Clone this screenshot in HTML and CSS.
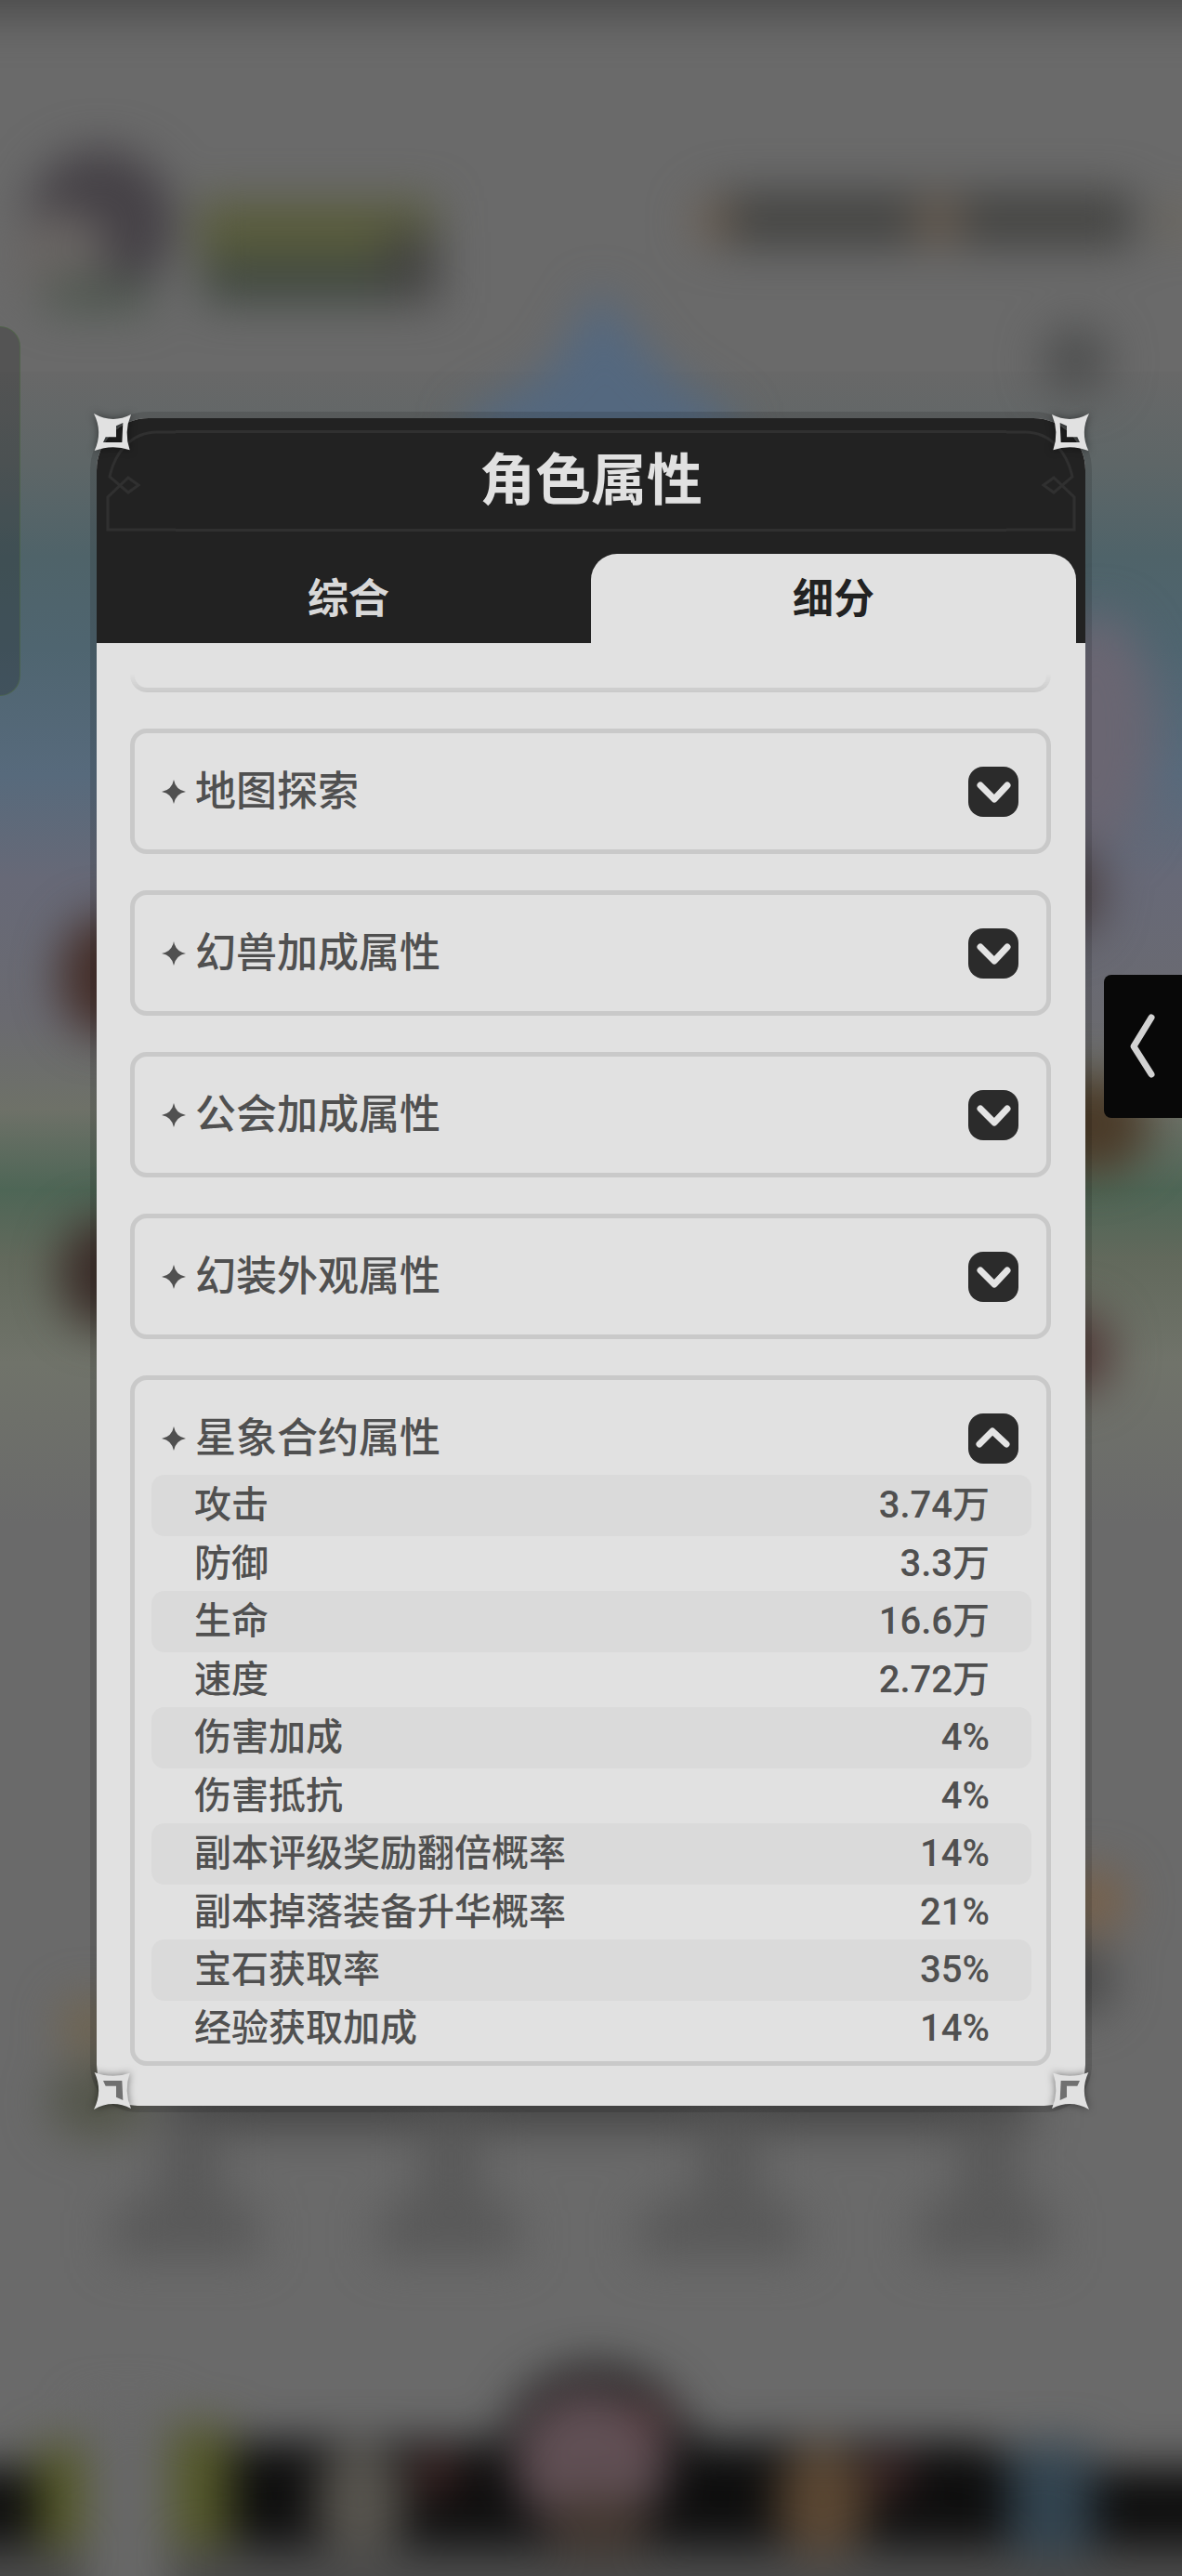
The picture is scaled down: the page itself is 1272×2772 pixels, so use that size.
FILE: index.html
```html
<!DOCTYPE html>
<html lang="zh-CN">
<head>
    <meta charset="UTF-8">
    <meta name="viewport" content="width=device-width, initial-scale=1.0">
    <title>角色属性</title>
    <link rel="stylesheet" href="styles.css">
</head>
<body>

<!-- blurred game scene behind the dialog -->
<svg class="scene" viewBox="0 0 1272 2772" preserveAspectRatio="none" aria-hidden="true">
    <defs>
        <filter id="soft" x="-10%" y="-10%" width="120%" height="120%" color-interpolation-filters="sRGB">
            <feGaussianBlur stdDeviation="24"/>
        </filter>
        <linearGradient id="sky" gradientUnits="userSpaceOnUse" x1="0" y1="400" x2="0" y2="1640">
            <stop offset="0" stop-color="#686868"/>
            <stop offset="0.08" stop-color="#5e6667"/>
            <stop offset="0.16" stop-color="#4f6369"/>
            <stop offset="0.24" stop-color="#4f6570"/>
            <stop offset="0.35" stop-color="#576a7c"/>
            <stop offset="0.44" stop-color="#676977"/>
            <stop offset="0.56" stop-color="#6a6a70"/>
            <stop offset="0.64" stop-color="#6e7168"/>
            <stop offset="0.71" stop-color="#4e6656"/>
            <stop offset="0.77" stop-color="#62695c"/>
            <stop offset="0.86" stop-color="#70736a"/>
            <stop offset="1" stop-color="#6a6a6a"/>
        </linearGradient>
    </defs>
    <rect width="1272" height="2772" fill="#6a6a6a"/>
    <rect y="400" width="1272" height="1240" fill="url(#sky)"/>
    <g filter="url(#soft)">
        <rect x="-60" y="-60" width="1400" height="76" fill="#4a4a4a"/>
        <!-- player badge -->
        <circle cx="108" cy="240" r="80" fill="#454146"/>
        <ellipse cx="66" cy="276" rx="50" ry="50" fill="#696563"/>
        <rect x="50" y="300" width="110" height="34" fill="#4c564d"/>
        <rect x="212" y="216" width="256" height="66" fill="#595c3c"/>
        <rect x="220" y="278" width="248" height="48" fill="#404840"/>
        <rect x="415" y="250" width="56" height="76" fill="#434341"/>
        <!-- currencies -->
        <rect x="770" y="206" width="450" height="60" fill="#444442"/>
        <circle cx="768" cy="238" r="22" fill="#6e5f50"/>
        <circle cx="1010" cy="238" r="26" fill="#6a5d50"/>
        <circle cx="1268" cy="238" r="16" fill="#6c6350"/>
        <ellipse cx="1158" cy="388" rx="36" ry="38" fill="#4e4f4f"/>
        <path d="M645 310 L715 400 L790 450 L790 520 L500 520 L500 450 L590 400 Z" fill="#54687f"/>
        <!-- side scenery -->
        <ellipse cx="1180" cy="790" rx="64" ry="130" fill="#6a6672"/>
        <ellipse cx="1150" cy="960" rx="36" ry="50" fill="#4a4042"/>
        <ellipse cx="1175" cy="1210" rx="62" ry="54" fill="#4a3a28"/>
        <ellipse cx="1155" cy="1455" rx="42" ry="46" fill="#503a38"/>
        <ellipse cx="114" cy="1050" rx="50" ry="66" fill="#442e29"/>
        <ellipse cx="114" cy="1370" rx="50" ry="60" fill="#3a2c28"/>
        <ellipse cx="1176" cy="2046" rx="36" ry="36" fill="#776049"/>
        <ellipse cx="1160" cy="2130" rx="38" ry="40" fill="#4a4a4a"/>
        <ellipse cx="96" cy="2180" rx="32" ry="32" fill="#70644e"/>
        <ellipse cx="106" cy="2262" rx="54" ry="40" fill="#535549"/>
        <!-- menu entries under the dialog -->
        <rect x="180" y="2200" width="930" height="90" fill="#454545"/>
        <path d="M172 2270 h66 v90 l40 20 v50 h-156 v-50 l50 -20 z" fill="#595959"/>
        <path d="M452 2270 h66 v90 l40 20 v50 h-151 v-50 l45 -20 z" fill="#595959"/>
        <path d="M752 2270 h66 v90 l45 20 v50 h-176 v-50 l65 -20 z" fill="#595959"/>
        <path d="M1032 2270 h66 v90 l35 20 v50 h-146 v-50 l45 -20 z" fill="#595959"/>
        <!-- bottom navigation -->
        <path d="M-60 2655 H250 V2628 H540 C560 2520 720 2520 745 2628 H1060 L1100 2655 H1340 V2742 H-60 Z" fill="#0e0e0e"/>
        <rect x="-60" y="2748" width="1400" height="90" fill="#4a4a4a"/>
        <rect x="40" y="2630" width="52" height="110" fill="#545826"/>
        <rect x="180" y="2610" width="68" height="130" fill="#545829"/>
        <rect x="90" y="2590" width="94" height="240" fill="#686868"/>
        <ellipse cx="388" cy="2690" rx="50" ry="60" fill="#57544e"/>
        <circle cx="470" cy="2662" r="22" fill="#4a2828"/>
        <ellipse cx="636" cy="2648" rx="84" ry="80" fill="#604f54"/>
        <rect x="595" y="2690" width="100" height="60" fill="#41362f"/>
        <circle cx="700" cy="2604" r="20" fill="#634548"/>
        <ellipse cx="885" cy="2690" rx="50" ry="60" fill="#5b4733"/>
        <circle cx="958" cy="2662" r="22" fill="#4a2b2d"/>
        <rect x="1086" y="2630" width="90" height="120" fill="#334450"/>
    </g>
</svg>

<aside class="edge-panel"></aside>

<main class="dialog">
    <header class="dialog-header">
        <div class="title-frame">
            <svg class="frame-cap" viewBox="0 0 75 109" aria-hidden="true">
                <path d="M75 2 H55 C26 2 9 26 4 50 L24 67 L35 59 L24 51 L2 72 V107 H75"/>
            </svg>
            <h1>角色属性</h1>
            <svg class="frame-cap frame-cap-right" viewBox="0 0 75 109" aria-hidden="true">
                <path d="M75 2 H55 C26 2 9 26 4 50 L24 67 L35 59 L24 51 L2 72 V107 H75"/>
            </svg>
        </div>
        <nav class="tabs" role="tablist">
            <button type="button" class="tab" role="tab" aria-selected="false">综合</button>
            <button type="button" class="tab active" role="tab" aria-selected="true">细分</button>
        </nav>
    </header>

    <div class="list">
        <div class="card-tail"></div>

        <section class="card">
            <div class="card-head">
                <svg class="spark" viewBox="0 0 26 26" aria-hidden="true"><path d="M13 0 Q15 11 26 13 Q15 15 13 26 Q11 15 0 13 Q11 11 13 0 Z"/></svg>
                <h2>地图探索</h2>
                <button type="button" class="toggle" aria-label="展开地图探索" aria-expanded="false">
                    <svg viewBox="0 0 54 54"><path d="M13 20 L28 35 L42 20"/></svg>
                </button>
            </div>
        </section>

        <section class="card">
            <div class="card-head">
                <svg class="spark" viewBox="0 0 26 26" aria-hidden="true"><path d="M13 0 Q15 11 26 13 Q15 15 13 26 Q11 15 0 13 Q11 11 13 0 Z"/></svg>
                <h2>幻兽加成属性</h2>
                <button type="button" class="toggle" aria-label="展开幻兽加成属性" aria-expanded="false">
                    <svg viewBox="0 0 54 54"><path d="M13 20 L28 35 L42 20"/></svg>
                </button>
            </div>
        </section>

        <section class="card">
            <div class="card-head">
                <svg class="spark" viewBox="0 0 26 26" aria-hidden="true"><path d="M13 0 Q15 11 26 13 Q15 15 13 26 Q11 15 0 13 Q11 11 13 0 Z"/></svg>
                <h2>公会加成属性</h2>
                <button type="button" class="toggle" aria-label="展开公会加成属性" aria-expanded="false">
                    <svg viewBox="0 0 54 54"><path d="M13 20 L28 35 L42 20"/></svg>
                </button>
            </div>
        </section>

        <section class="card">
            <div class="card-head">
                <svg class="spark" viewBox="0 0 26 26" aria-hidden="true"><path d="M13 0 Q15 11 26 13 Q15 15 13 26 Q11 15 0 13 Q11 11 13 0 Z"/></svg>
                <h2>幻装外观属性</h2>
                <button type="button" class="toggle" aria-label="展开幻装外观属性" aria-expanded="false">
                    <svg viewBox="0 0 54 54"><path d="M13 20 L28 35 L42 20"/></svg>
                </button>
            </div>
        </section>

        <section class="card open">
            <div class="card-head">
                <svg class="spark" viewBox="0 0 26 26" aria-hidden="true"><path d="M13 0 Q15 11 26 13 Q15 15 13 26 Q11 15 0 13 Q11 11 13 0 Z"/></svg>
                <h2>星象合约属性</h2>
                <button type="button" class="toggle" aria-label="收起星象合约属性" aria-expanded="true">
                    <svg viewBox="0 0 54 54"><path d="M12 33 L26 19 L41 33"/></svg>
                </button>
            </div>
            <div class="card-body">
                <table class="stats">
                    <tr><th scope="row">攻击</th><td>3.74万</td></tr>
                    <tr><th scope="row">防御</th><td>3.3万</td></tr>
                    <tr><th scope="row">生命</th><td>16.6万</td></tr>
                    <tr><th scope="row">速度</th><td>2.72万</td></tr>
                    <tr><th scope="row">伤害加成</th><td>4%</td></tr>
                    <tr><th scope="row">伤害抵抗</th><td>4%</td></tr>
                    <tr><th scope="row">副本评级奖励翻倍概率</th><td>14%</td></tr>
                    <tr><th scope="row">副本掉落装备升华概率</th><td>21%</td></tr>
                    <tr><th scope="row">宝石获取率</th><td>35%</td></tr>
                    <tr><th scope="row">经验获取加成</th><td>14%</td></tr>
                </table>
            </div>
        </section>
    </div>

    <!-- corner ornaments -->
    <svg class="corner top-left" viewBox="0 0 120 120" aria-hidden="true"><path fill-rule="evenodd" d="M0 0 Q60 34 120 3 Q96 60 116 118 Q60 98 2 120 Q30 60 0 0 Z M94 30 L72 40 V76 H38 L30 93 H91 Z"/></svg>
    <svg class="corner top-right" viewBox="0 0 120 120" aria-hidden="true"><path fill-rule="evenodd" d="M0 0 Q60 34 120 3 Q96 60 116 118 Q60 98 2 120 Q30 60 0 0 Z M94 30 L72 40 V76 H38 L30 93 H91 Z"/></svg>
    <svg class="corner bottom-left" viewBox="0 0 120 120" aria-hidden="true"><path d="M0 0 Q60 34 120 3 Q96 60 116 118 Q60 98 2 120 Q30 60 0 0 Z"/><path class="notch" d="M94 30 L72 40 V76 H38 L30 93 H91 Z"/></svg>
    <svg class="corner bottom-right" viewBox="0 0 120 120" aria-hidden="true"><path d="M0 0 Q60 34 120 3 Q96 60 116 118 Q60 98 2 120 Q30 60 0 0 Z"/><path class="notch" d="M94 30 L72 40 V76 H38 L30 93 H91 Z"/></svg>
</main>

<button type="button" class="drawer-handle" aria-label="打开侧栏">
    <svg viewBox="0 0 84 154"><path d="M51 46 L32 77 L51 107"/></svg>
</button>

</body>
</html>
```

FILE: styles.css
```css
* {
    box-sizing: border-box;
}

body {
    margin: 0;
    min-height: 100vh;
    padding: 450px 104px 500px;
    position: relative;
    overflow-x: hidden;
    background-color: #6a6a6a;
    font-family: Roboto, "Noto Sans CJK SC", sans-serif;
    color: #505050;
}

h1, h2 {
    margin: 0;
}

button {
    border: none;
    padding: 0;
    font-family: inherit;
    cursor: pointer;
}

.scene {
    position: absolute;
    top: 0;
    left: 0;
    width: 100%;
    height: 100%;
}

/* things docked to the screen edges */
.edge-panel {
    position: absolute;
    top: 351px;
    left: 0;
    width: 22px;
    height: 398px;
    background-color: rgba(0, 0, 0, 0.2);
    border: 1px solid rgba(80, 110, 70, 0.6);
    border-left: none;
    border-radius: 0 22px 22px 0;
}

.drawer-handle {
    position: absolute;
    top: 1049px;
    right: 0;
    width: 84px;
    height: 154px;
    background-color: #080808;
    border-radius: 8px 0 0 8px;
}

.drawer-handle svg {
    display: block;
    fill: none;
    stroke: #d2d2d2;
    stroke-width: 7;
    stroke-linecap: round;
    stroke-linejoin: round;
}

/* dialog */
.dialog {
    position: relative;
    background-color: #e1e1e1;
    border-radius: 56px 56px 44px 44px;
    box-shadow: 0 0 0 7px rgba(0, 0, 0, 0.12);
}

.dialog-header {
    padding: 13px 10px 0;
    background-color: #222;
    border-radius: 56px 56px 0 0;
}

.title-frame {
    display: flex;
    height: 109px;
    margin-bottom: 24px;
}

.title-frame h1 {
    flex: 1;
    border-top: 3px solid #303030;
    border-bottom: 3px solid #303030;
    color: #e1e1e1;
    font-size: 60px;
    font-weight: 700;
    line-height: 103px;
    text-align: center;
}

.frame-cap {
    width: 75px;
    height: 109px;
    fill: none;
    stroke: #303030;
    stroke-width: 3;
}

.frame-cap-right {
    transform: scaleX(-1);
}

.tabs {
    display: flex;
}

.tab {
    flex: 1;
    height: 96px;
    padding-bottom: 6px;
    background-color: transparent;
    border-radius: 28px 28px 0 0;
    color: #d8d8d8;
    font-size: 44px;
    font-weight: 700;
}

.tab.active {
    background-color: #e1e1e1;
    color: #222;
}

/* attribute groups */
.list {
    display: flex;
    flex-direction: column;
    gap: 39px;
    padding: 33px 37px 43px 36px;
}

.card-tail {
    height: 20px;
    border: 5px solid #c9c9c9;
    border-top: none;
    border-radius: 0 0 18px 18px;
    -webkit-mask-image: linear-gradient(transparent, #000);
    mask-image: linear-gradient(transparent, #000);
}

.card {
    border: 5px solid #c9c9c9;
    border-radius: 18px;
}

.card-head {
    display: flex;
    align-items: center;
    height: 125px;
    padding: 0 30px 0 29px;
}

.spark {
    width: 26px;
    height: 26px;
    margin-right: 10px;
    fill: #505050;
}

.card-head h2 {
    flex: 1;
    font-size: 44px;
    font-weight: 500;
    line-height: 64px;
}

.toggle {
    width: 54px;
    height: 54px;
    background-color: #2b2b2b;
    border-radius: 16px;
}

.toggle svg {
    display: block;
    fill: none;
    stroke: #e4e4e4;
    stroke-width: 7;
    stroke-linecap: round;
    stroke-linejoin: round;
}

.card.open .card-head {
    height: 102px;
    padding-top: 23px;
}

.card-body {
    padding: 0 16px 6px 18px;
}

.stats {
    width: 100%;
    border-collapse: collapse;
    font-size: 40px;
    line-height: 58px;
}

.stats th,
.stats td {
    height: 59px;
    padding: 0;
    font-weight: 500;
}

.stats th {
    padding-left: 46px;
    border-radius: 14px 0 0 14px;
    text-align: left;
}

.stats td {
    padding-right: 45px;
    border-radius: 0 14px 14px 0;
    text-align: right;
}

.stats tr:nth-child(odd) th,
.stats tr:nth-child(odd) td {
    height: 66px;
    background-color: #dadada;
}

/* corner ornaments */
.corner {
    position: absolute;
    width: 40px;
    height: 40px;
    fill: #e1e1e1;
    filter: drop-shadow(0 0 4px rgba(0, 0, 0, 0.5));
}

.corner .notch {
    fill: #707070;
}

.top-left {
    top: -5px;
    left: -3px;
}

.top-right {
    top: -5px;
    right: -4px;
    transform: scaleX(-1);
}

.bottom-left {
    bottom: -4px;
    left: -3px;
    transform: scaleY(-1);
}

.bottom-right {
    right: -4px;
    bottom: -4px;
    transform: scale(-1, -1);
}
```
